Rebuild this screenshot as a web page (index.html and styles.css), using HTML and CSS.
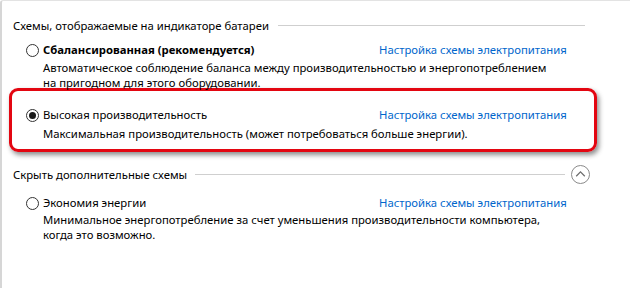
FILE: index.html
```html
<!DOCTYPE html>
<html lang="ru">
<head>
<meta charset="utf-8">
<title>Электропитание</title>
<link rel="stylesheet" href="styles.css">
</head>
<body>
<div class="panel">
    <div class="group-head first">
        <span class="group-title">Схемы, отображаемые на индикаторе батареи</span>
        <span class="group-line"></span>
    </div>

    <div class="plan first-plan">
        <span class="radio"></span>
        <span class="plan-name bold">Сбалансированная (рекомендуется)</span>
        <a class="plan-link" href="#">Настройка схемы электропитания</a>
        <p class="plan-desc">Автоматическое соблюдение баланса между производительностью и энергопотреблением<br>на пригодном для этого оборудовании.</p>
    </div>

    <div class="plan marked">
        <span class="radio checked"></span>
        <span class="plan-name">Высокая производительность</span>
        <a class="plan-link" href="#">Настройка схемы электропитания</a>
        <p class="plan-desc">Максимальная производительность (может потребоваться больше энергии).</p>
    </div>

    <div class="group-head second">
        <span class="group-title">Скрыть дополнительные схемы</span>
        <span class="group-line"></span>
        <span class="collapse">
            <svg width="19" height="19" viewBox="0 0 19 19">
                <circle cx="9.5" cy="9.5" r="9" fill="#fff" stroke="#8a8a8a" stroke-width="1"/>
                <path d="M5.2 11.2 L9.5 6.9 L13.8 11.2" fill="none" stroke="#6e6e6e" stroke-width="1.3"/>
            </svg>
        </span>
    </div>

    <div class="plan last-plan">
        <span class="radio"></span>
        <span class="plan-name">Экономия энергии</span>
        <a class="plan-link" href="#">Настройка схемы электропитания</a>
        <p class="plan-desc">Минимальное энергопотребление за счет уменьшения производительности компьютера,<br>когда это возможно.</p>
    </div>
</div>
</body>
</html>
```

FILE: styles.css
```css
html,body,p{margin:0;padding:0;}
body{background:#fff;font:11.3px/15px "Noto Sans","DejaVu Sans",sans-serif;color:#000;}
.panel{height:288px;border-top:1px solid #e3e3e3;border-left:2px solid #d6d6d6;border-top-left-radius:3px;padding-top:17px;box-sizing:border-box;}

/* заголовки групп с линией */
.group-head{display:flex;align-items:center;padding-left:11px;}
.group-head.first{margin-right:45px;}
.group-head.second{margin-right:40px;margin-top:13px;height:19px;}
.group-title{white-space:nowrap;}
.group-line{flex:1;height:0;border-top:1px solid #cfcfcf;margin-left:9px;}
.group-head.second .group-line{margin-left:8px;}
.collapse{display:block;width:19px;height:19px;margin-left:6px;}
.collapse svg{display:block;}

/* схема электропитания */
.plan{display:grid;grid-template-columns:17px 336px auto;align-items:center;padding-left:24px;}
.plan.first-plan{margin-top:9px;}
.plan.last-plan{margin-top:11px;}
.plan.marked{margin:-2px 33px 0 7px;padding:16px 0 8px 14px;border:3px solid #e30611;border-radius:9px;box-shadow:2px 3px 5px rgba(0,0,0,.45);}
.radio{width:13px;height:13px;border:1px solid #333;border-radius:50%;box-sizing:border-box;position:relative;margin-top:2px;}
.radio.checked:after{content:"";position:absolute;left:2px;top:2px;width:7px;height:7px;border-radius:50%;background:#1a1a1a;}
.plan-name{white-space:nowrap;}
.plan-name.bold{font-weight:700;}
.plan-link{color:#0066cc;text-decoration:none;white-space:nowrap;}
.plan-desc{grid-column:2 / 4;margin-top:3px;white-space:nowrap;}
.marked .plan-desc{margin-top:4px;}
.last-plan .plan-desc{line-height:14.5px;}
```
